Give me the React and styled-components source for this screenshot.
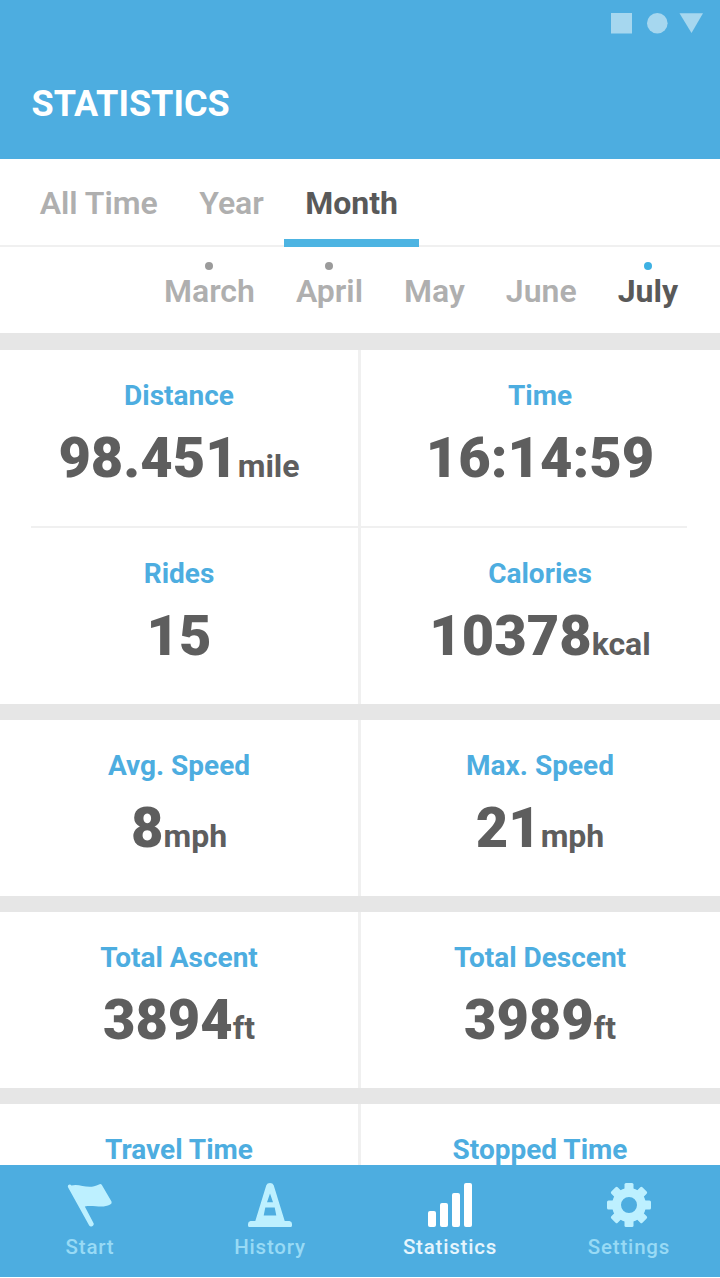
import React from 'react';
import styled, { createGlobalStyle } from 'styled-components';

const GlobalStyle = createGlobalStyle`
  * {
    box-sizing: border-box;
  }

  body {
    margin: 0;
    background: #fff;
    font-family: Roboto, sans-serif;
  }
`

const Screen = styled.div`
  display: flex;
  flex-direction: column;
  width: 720px;
  height: 1278px;
  padding-bottom: 1px;
  background: #fff;
  overflow: hidden;
`

const Header = styled.header`
  display: flex;
  flex-direction: column;
  justify-content: space-between;
  flex: none;
  height: 159px;
  padding: 13px 16px 34px 31.5px;
  background: #4dade0;
`

const StatusIcons = styled.svg`
  align-self: flex-end;
  display: block;
  fill: #a6d7ef;
`

const Title = styled.h1`
  margin: 0;
  color: #fff;
  font-size: 36px;
  line-height: 42px;
  font-weight: 700;
`

const Tabs = styled.nav`
  display: flex;
  flex: none;
  height: 88px;
  padding-left: 19px;
  border-bottom: 2px solid #f0f0f0;
`

const Tab = styled.a`
  height: 88px;
  padding: 25px 20.7px 0;
  border-bottom: 8px solid ${props => (props.$active ? '#4db4e2' : 'transparent')};
  color: ${props => (props.$active ? '#595959' : '#afafaf')};
  font-size: 32px;
  line-height: 38px;
  font-weight: ${props => (props.$active ? 700 : 600)};
  white-space: nowrap;
`

const Months = styled.div`
  display: flex;
  justify-content: flex-end;
  gap: 41px;
  flex: none;
  height: 86px;
  padding: 15px 42px 0 0;
`

const MonthItem = styled.div`
  display: flex;
  flex-direction: column;
  align-items: center;
  color: ${props => (props.$active ? '#595959' : '#afafaf')};
  font-size: 32px;
  line-height: 38px;
  font-weight: ${props => (props.$active ? 700 : 600)};
`

const Dot = styled.span`
  width: 8px;
  height: 8px;
  margin-bottom: 2px;
  border-radius: 50%;
  background: ${props => props.$color};
`

const Content = styled.main`
  flex: 1;
  min-height: 0;
  overflow: hidden;
`

const Group = styled.section`
  border-top: ${props => props.$bar || 16}px solid #e6e6e6;
`

const Row = styled.div`
  display: grid;
  grid-template-columns: 358px 3px 358px;
  height: 176px;
`

const Divider = styled.span`
  background: #f0f0f0;
`

const RowLine = styled.hr`
  height: 2px;
  margin: 0 33px 0 31px;
  border: 0;
  background: #f0f0f0;
`

const Stat = styled.div`
  display: flex;
  flex-direction: column;
  align-items: center;
  padding-top: 29px;
`

const Label = styled.div`
  color: #4dade0;
  font-size: 28px;
  line-height: 34px;
  font-weight: 700;
  white-space: nowrap;
`

const Value = styled.div`
  margin-top: 12px;
  color: #5e5e5e;
  font-size: 56px;
  line-height: 66px;
  font-weight: 900;
  white-space: nowrap;
`

const Unit = styled.span`
  font-size: 32px;
  font-weight: 700;
`

const BottomBar = styled.nav`
  display: grid;
  grid-template-columns: 179px 181px 179px 179px;
  flex: none;
  height: 112px;
  background: #4dade0;
`

const NavItem = styled.a`
  display: flex;
  flex-direction: column;
  align-items: center;
  padding-top: 17px;
  color: ${props => (props.$active ? '#fff' : '#bdf0ff')};

  svg {
    display: block;
    fill: currentColor;
    stroke: none;
  }
`

const NavLabel = styled.span`
  margin-top: 7px;
  padding-left: 1px;
  color: ${props => (props.$active ? '#e6f5fd' : '#98daf5')};
  font-size: 20.5px;
  line-height: 24px;
  font-weight: 500;
  letter-spacing: 0.8px;
`

const Icon = ({ children }) => (
	<svg width="46" height="46" viewBox="0 0 46 46">{children}</svg>
);

const FlagIcon = () => (
	<Icon>
		<path d="M1 5.2C0 3.2 3 1.4 4.4 3.5C13 1 21 8.2 32 2.4Q34 1.500 35 3.2L44.500 19.5Q45.400 21.5 43.200 22.6C35 27 27 22.5 17.8 24.4L26.600 41.2C27.600 43.4 23.7 46 22.2 43.4Z" />
	</Icon>
);

const ConeIcon = () => (
	<Icon>
		<path fillRule="evenodd" d="M19.3 3.2Q20.2 1 23 1Q25.8 1 26.7 3.2L37.7 39H42.5Q45 39.3 45 42V43.5Q45 45 43.5 45H2.5Q1 45 1 43.5V42Q1 39.3 3.5 39H8.3ZM23 11.5L20 20.3H26ZM18.3 25.5L16.7 33.5H29.3L27.7 25.5Z" />
	</Icon>
);

const BarsIcon = () => (
	<Icon>
		<rect x="1" y="29" width="8" height="16" rx="2" />
		<rect x="13" y="21" width="8" height="24" rx="2" />
		<rect x="25" y="11" width="8" height="34" rx="2" />
		<rect x="37" y="1" width="8" height="44" rx="2" />
	</Icon>
);

const GearIcon = () => (
	<Icon>
		<circle cx="23" cy="23" r="12.5" fill="none" stroke="currentColor" strokeWidth="9" />
		{[0, 45, 90, 135, 180, 225, 270, 315].map(angle => (
			<rect key={angle} x="18.5" y="1" width="9" height="9" rx="1.5" transform={`rotate(${angle} 23 23)`} />
		))}
	</Icon>
);

const groups = [
	[
		[{ label: 'Distance', value: '98.451', unit: 'mile' }, { label: 'Time', value: '16:14:59' }],
		[{ label: 'Rides', value: '15' }, { label: 'Calories', value: '10378', unit: 'kcal' }],
	],
	[[{ label: 'Avg. Speed', value: '8', unit: 'mph' }, { label: 'Max. Speed', value: '21', unit: 'mph' }]],
	[[{ label: 'Total Ascent', value: '3894', unit: 'ft' }, { label: 'Total Descent', value: '3989', unit: 'ft' }]],
	[[{ label: 'Travel Time' }, { label: 'Stopped Time' }]],
];

const months = [
	{ name: 'March', dot: '#9b9b9b' },
	{ name: 'April', dot: '#9b9b9b' },
	{ name: 'May', dot: 'transparent' },
	{ name: 'June', dot: 'transparent' },
	{ name: 'July', dot: '#3eb1e3', active: true },
];

const navItems = [
	{ name: 'Start', icon: FlagIcon },
	{ name: 'History', icon: ConeIcon },
	{ name: 'Statistics', icon: BarsIcon, active: true },
	{ name: 'Settings', icon: GearIcon },
];

const StatCell = ({ label, value, unit }) => (
	<Stat>
		<Label>{label}</Label>
		{value ? <Value>{value}{unit ? <Unit>{unit}</Unit> : null}</Value> : null}
	</Stat>
);

const App = () => {
	return (
		<Screen>
			<GlobalStyle />
			<Header>
				<StatusIcons width="94" height="21" viewBox="0 0 94 21">
					<rect x="1" y="0" width="21" height="20.5" />
					<circle cx="47.3" cy="10.3" r="10.3" />
					<path d="M69.5 .3H93L81.5 20Z" />
				</StatusIcons>
				<Title>STATISTICS</Title>
			</Header>
			<Tabs>
				<Tab>All Time</Tab>
				<Tab>Year</Tab>
				<Tab $active>Month</Tab>
			</Tabs>
			<Months>
				{months.map(month => (
					<MonthItem key={month.name} $active={month.active}>
						<Dot $color={month.dot} />
						{month.name}
					</MonthItem>
				))}
			</Months>
			<Content>
				{groups.map((rows, i) => (
					<Group key={i} $bar={i === 0 ? 17 : 16}>
						{rows.map(([left, right], j) => (
							<React.Fragment key={left.label}>
								{j > 0 ? <RowLine /> : null}
								<Row>
									<StatCell {...left} />
									<Divider />
									<StatCell {...right} />
								</Row>
							</React.Fragment>
						))}
					</Group>
				))}
			</Content>
			<BottomBar>
				{navItems.map(({ name, icon: NavIcon, active }) => (
					<NavItem key={name} $active={active}>
						<NavIcon />
						<NavLabel $active={active}>{name}</NavLabel>
					</NavItem>
				))}
			</BottomBar>
		</Screen>
	);
};

export default App;
